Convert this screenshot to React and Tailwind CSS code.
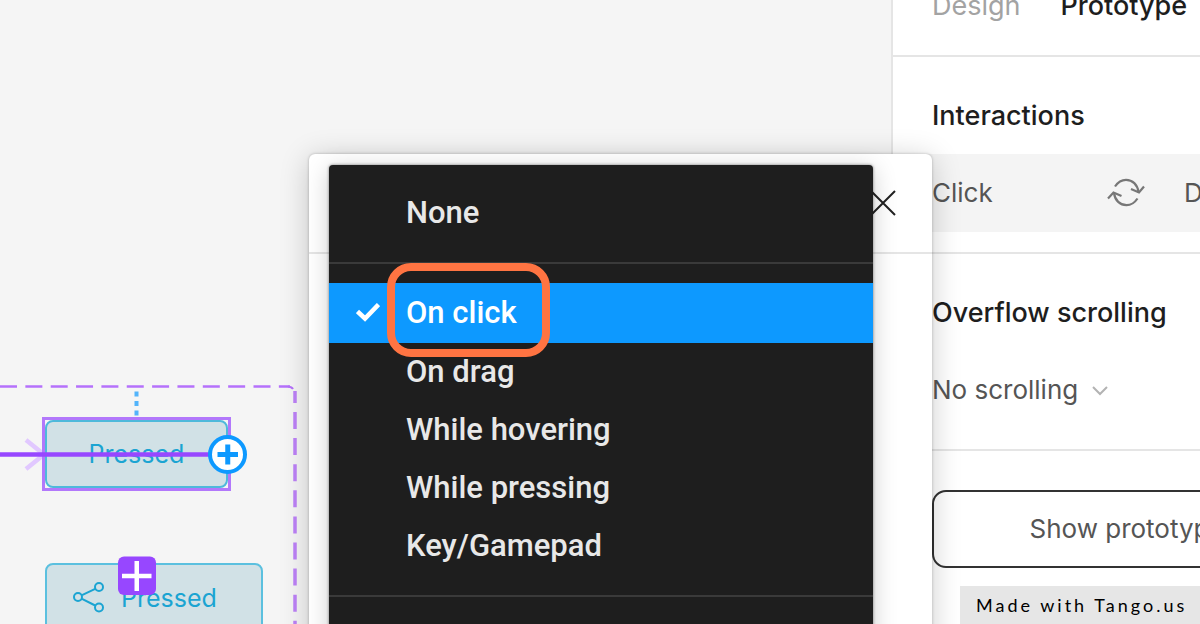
const menuGroups = [
  ['None'],
  ['On click', 'On drag', 'While hovering', 'While pressing', 'Key/Gamepad'],
];

function CheckIcon() {
  return (
    <svg className="h-5 w-6" viewBox="0 0 24 20" fill="none" stroke="white" strokeWidth="4.5" aria-hidden="true">
      <path d="M1.5 8.5L9 15.5L22.5 1.5" />
    </svg>
  );
}

function LoopIcon() {
  return (
    <svg className="h-8 w-10 shrink-0" viewBox="0 0 40 32" fill="none" stroke="#777" strokeWidth="2.2" aria-hidden="true">
      <path d="M9 9.500C12 5 16 2.800 20 2.800C26.500 2.800 31.500 7.500 32.500 15" />
      <path d="M25 12L33 15.500L38 9.500" />
      <path d="M31.500 21.500C28.500 26 24.500 28.200 20.500 28.200C14 28.200 9 23.500 8 16" />
      <path d="M2 21.500L7.500 15.500L15.500 19" />
    </svg>
  );
}

function ShareIcon() {
  return (
    <svg className="h-8 w-8" viewBox="0 0 32 32" fill="none" stroke="#1ba4d2" strokeWidth="2" aria-hidden="true">
      <circle cx="5" cy="15" r="4" />
      <circle cx="26" cy="5" r="4" />
      <circle cx="26" cy="25.5" r="4" />
      <path d="M9 13.200L22.200 6.800M9 16.800L22.200 23.500" />
    </svg>
  );
}

function Canvas() {
  return (
    <main className="relative min-w-0 flex-1 overflow-hidden bg-[#f5f5f5]">
      <svg className="absolute left-0 top-0 h-[700px] w-[309px]" viewBox="0 0 309 700" fill="none" aria-hidden="true">
        <path d="M0 386.500H290" stroke="#b571fb" strokeWidth="2.500" strokeDasharray="17 8.350" />
        <path d="M288 386.500Q292 387 293 389" stroke="#b571fb" strokeWidth="2" />
        <path d="M295 391V403M295 412V700" stroke="#bd82f8" strokeWidth="3.500" strokeDasharray="17 9.100" />
        <path d="M136.500 387V416" stroke="#52b4fb" strokeWidth="4" strokeDasharray="5 4.500" strokeDashoffset="5" />
        <path d="M26 440L44 454.500L26 469" stroke="#e1c8ff" strokeWidth="4.500" />
      </svg>
      <div className="absolute left-[42px] top-[417px] flex h-[74px] w-[189px] border-[3px] border-[#b278fb]">
        <div className="flex flex-1 items-center justify-center rounded-lg border-2 border-[#4eb9db] bg-[#d1e1e6] text-[25px] leading-9 text-[#1ba4d2]">
          Pressed
        </div>
      </div>
      <div className="absolute left-[45px] top-[563px] flex h-[70px] w-[218px] items-center gap-4 rounded-lg border-2 border-[#5bc0df] bg-[#d1e1e6] pl-[26px] text-[25px] leading-9 text-[#1ba4d2]">
        <ShareIcon />
        Pressed
      </div>
      <svg className="absolute left-0 top-0 h-[624px] w-[309px]" viewBox="0 0 309 624" fill="none" aria-hidden="true">
        <path d="M0 454.500H212" stroke="#9747ff" strokeWidth="4.500" />
        <circle cx="227.500" cy="454.500" r="17.500" fill="white" stroke="#0d99ff" strokeWidth="4" />
        <path d="M217.500 454.500H238M227.750 444.500V464.500" stroke="#0d99ff" strokeWidth="5" />
        <rect x="118" y="556.500" width="38" height="38.500" rx="6" fill="#9747ff" />
        <path d="M122 576H151.500M136.750 561V591" stroke="white" strokeWidth="4.500" />
      </svg>
    </main>
  );
}

function Sidebar() {
  return (
    <aside className="flex w-[309px] shrink-0 flex-col overflow-hidden border-l-2 border-[#e5e5e5] bg-white text-[26px] leading-9 text-[#555]">
      <nav className="-mt-3 flex gap-10 border-b-2 border-[#e5e5e5] pb-[31px] pl-[39px] text-[27px]">
        <button className="text-[#a3a3a3]">Design</button>
        <button className="font-medium text-[#1e1e1e]">Prototype</button>
      </nav>
      <section className="border-b-2 border-[#e5e5e5] pb-5">
        <h2 className="flex h-[97px] items-center pl-[39px] pt-5 text-[27px] font-medium text-[#1e1e1e]">Interactions</h2>
        <button className="flex h-[78px] w-full items-center bg-[#f4f4f4] pl-[39px]">
          <span className="w-[174px] shrink-0 text-left">Click</span>
          <LoopIcon />
          <span className="ml-[38px]">Default</span>
        </button>
      </section>
      <section className="border-b-2 border-[#e5e5e5] pb-5 pl-[39px]">
        <h2 className="flex h-[97px] items-center whitespace-nowrap pt-5 text-[27px] font-medium text-[#1e1e1e]">Overflow scrolling</h2>
        <button className="flex h-[78px] items-center gap-3">
          No scrolling
          <svg className="h-4 w-5" viewBox="0 0 20 16" fill="none" stroke="#b3b3b3" strokeWidth="2" aria-hidden="true">
            <path d="M3 5L10 12L17 5" />
          </svg>
        </button>
      </section>
      <button className="ml-[39px] mt-[39px] h-[78px] w-[494px] shrink-0 whitespace-nowrap rounded-[14px] border-2 border-[#333]">
        Show prototype settings
      </button>
    </aside>
  );
}

function TriggerDialog() {
  return (
    <div role="dialog" aria-label="Interaction" className="absolute left-[309px] top-[154px] h-[640px] w-[623px] rounded-md bg-white shadow-[0_4px_30px_rgba(0,0,0,0.2),0_0_3px_rgba(0,0,0,0.25)]">
      <header className="flex h-[100px] items-center justify-end border-b-2 border-[#e5e5e5] pr-[35px]">
        <button aria-label="Close">
          <svg className="h-7 w-7" viewBox="0 0 28 28" fill="none" stroke="#222" strokeWidth="2" aria-hidden="true">
            <path d="M2 2L26 26M26 2L2 26" />
          </svg>
        </button>
      </header>
      <div role="menu" className="absolute left-5 top-[11px] h-[640px] w-[544px] rounded-sm bg-[#1e1e1e] pt-[19px] font-['Roboto',sans-serif] text-[31px] font-medium leading-9 text-[#e8e8e8] shadow-[0_4px_24px_rgba(0,0,0,0.2),0_0_3px_rgba(0,0,0,0.5)]">
        {menuGroups.map((group) => (
          <div key={group[0]} className="mb-[19px] border-b-2 border-[#3a3a3a] pb-5">
            {group.map((label) =>
              label === 'On click' ? (
                <button key={label} role="menuitemradio" aria-checked="true" className="relative flex h-[60px] w-full items-center gap-[26px] bg-[#0d99ff] pl-[27px] text-white">
                  <CheckIcon />
                  {label}
                  <span className="absolute -top-5 left-[58px] h-[94px] w-[163px] rounded-[24px] border-8 border-[#ff7442]" />
                </button>
              ) : (
                <button key={label} role="menuitemradio" aria-checked="false" className="flex h-[58px] w-full items-center pl-[77px]">
                  {label}
                </button>
              )
            )}
          </div>
        ))}
      </div>
    </div>
  );
}

export default function App() {
  return (
    <div className="relative flex h-screen overflow-hidden font-['Inter',sans-serif]">
      <Canvas />
      <Sidebar />
      <TriggerDialog />
      <a href="#tango" className="absolute bottom-0 right-0 flex h-[38px] w-60 items-center bg-[#e6e6e6] pl-4 font-['Lato',sans-serif] text-lg tracking-[3px] text-black">
        Made with Tango.us
      </a>
    </div>
  );
}
